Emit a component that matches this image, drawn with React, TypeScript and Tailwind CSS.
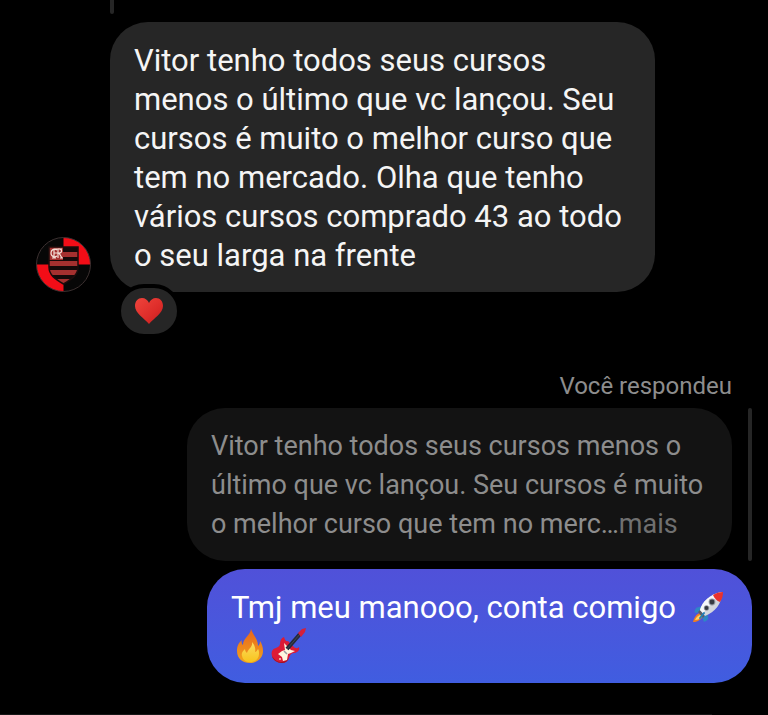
import type { ReactNode } from "react";

function Rocket() {
  return (
    <svg role="img" aria-label="foguete" viewBox="0 0 36 36" className="ml-1.5 inline-block size-9 align-[-7px]">
      <path d="M9 18C6 18 4 21 5 24l6-1 3-6zM18 27c1 3-1 5-4 6l-2-5 5-5z" fill="#2f86c5" />
      <path d="M10 24c-4 1-6 5-7 9 4 0 8-2 10-6z" fill="#ef7d22" />
      <path d="M10 26c-3 1-4 3-5 5 3 0 5-1 7-4z" fill="#ffd363" />
      <path d="M8 23l3-3 5 5-3 4z" fill="#5c5d68" />
      <path d="M10 21C12 13 20 5 32 3c0 12-7 20-17 24z" fill="#d3d6dd" />
      <path d="M10 21C12 13 20 5 32 3L13 24z" fill="#f6f7f9" />
      <path d="M23 6c3-2 6-3 10-3 0 4-1 7-3 10-3-1-6-4-7-7z" fill="#e9322d" />
      <circle cx="22" cy="13" r="3.4" fill="#9296a0" />
      <circle cx="22" cy="13" r="2.4" fill="#353942" />
      <circle cx="16.5" cy="19" r="2.7" fill="#9296a0" />
      <circle cx="16.5" cy="19" r="1.9" fill="#353942" />
      <path d="M14 24l-4 5" stroke="#2381b8" strokeWidth="2" strokeLinecap="round" />
    </svg>
  );
}

function Fire() {
  return (
    <svg role="img" aria-label="fogo" viewBox="0 0 36 36" className="mx-px inline-block size-9 align-[-7px]">
      <defs>
        <linearGradient id="flame" x1="0" y1="0" x2="0" y2="1">
          <stop offset="0" stopColor="#e8641c" />
          <stop offset="0.6" stopColor="#ee8a1c" />
          <stop offset="1" stopColor="#f0a51f" />
        </linearGradient>
        <linearGradient id="flame-core" x1="0" y1="0" x2="0" y2="1">
          <stop offset="0" stopColor="#fbdc62" />
          <stop offset="1" stopColor="#f8c41d" />
        </linearGradient>
      </defs>
      <path
        d="M19 1c-1 7-8 9-8 16-1-1-2-3-1-5-4 3-5 7-5 11 0 8 6 12 13 12s13-5 13-12c0-4-1-7-3-10 0 3-1 4-2 5 0-7-5-11-7-17z"
        fill="url(#flame)"
      />
      <path
        d="M20 14c1 5-4 7-5 11-1-1-2-2-2-4-2 2-4 4-3 7 1 4 4 6 8 6 5 0 9-3 9-8 0-2 0-4-1-5-1 2-2 3-3 3 1-4-1-8-3-10z"
        fill="url(#flame-core)"
      />
    </svg>
  );
}

function Guitar() {
  return (
    <svg role="img" aria-label="guitarra" viewBox="0 0 36 36" className="mx-px inline-block size-9 align-[-7px]">
      <path
        d="M14 9c-3 1-4 4-4 7 0 2-2 3-4 4-4 1-5 4-4 8 1 4 5 7 10 7 3 0 6-2 7-5 1-4 3-5 6-5 3-1 5-3 4-6-2 2-4 1-5 0l-6-6c-2 1-3-1-4-4z"
        fill="#dc1b36"
      />
      <path d="M2 28c1 4 5 7 10 7 3 0 6-2 7-5-3 3-5 4-8 4-4 0-7-3-9-6z" fill="#9f1024" />
      <path d="M14 15l7 7 4 1-4 2-3 1-1 6-4 1-1-4-4-3 4-3 3-1z" fill="#fff5df" />
      <path d="M17 21L30 6" stroke="#25293a" strokeWidth="4" />
      <path d="M17 21L30 6" stroke="#424854" strokeWidth="1" />
      <path d="M28 5l4-4 4-1-1 4-4 5z" fill="#d4203a" />
      <path d="M14 23l3 3" stroke="#9a9aa0" strokeWidth="1.5" />
      <circle cx="10" cy="31" r="1" fill="#f5d6b8" />
    </svg>
  );
}

function Heart() {
  return (
    <svg role="img" aria-label="coração" viewBox="0 0 28 26" className="h-[26px] w-7">
      <defs>
        <linearGradient id="heart" x1="0" y1="0" x2="1" y2="1">
          <stop offset="0" stopColor="#ef443c" />
          <stop offset="0.6" stopColor="#dd2c29" />
          <stop offset="1" stopColor="#c01d20" />
        </linearGradient>
      </defs>
      <path d="M14 26C9 20 0 15 0 8c0-5 3-8 7-8 3 0 6 2 7 5 1-3 4-5 7-5 4 0 7 3 7 8 0 7-9 12-14 18z" fill="url(#heart)" />
    </svg>
  );
}

function Avatar() {
  return (
    <svg role="img" aria-label="Foto de perfil" viewBox="0 0 56 56" className="size-14 shrink-0">
      <circle cx="27.5" cy="28.5" r="27" fill="#070707" />
      <path d="M27.5 1.5a27 27 0 0 1 27 27h-27zM27.5 55.5a27 27 0 0 1-27-27h27z" fill="#f30d17" />
      <circle cx="27.5" cy="28.5" r="27" fill="none" stroke="#3b3030" strokeWidth="1" />
      <clipPath id="crest">
        <path d="M13 11h29v20c0 8-6 12-14.5 17C19 43 13 39 13 31z" />
      </clipPath>
      <g clipPath="url(#crest)">
        <path d="M12 10h31v40H12z" fill="#150909" />
        <path d="M27 16h16v5H27zM12 25h31v5H12zM12 34h31v5H12zM12 43h31v5H12z" fill="#a5302f" />
        <path d="M13 11h14v13H13z" fill="#a5302f" />
      </g>
      <path d="M13 11h29v20c0 8-6 12-14.5 17C19 43 13 39 13 31z" fill="none" stroke="#1c0c0c" strokeWidth="1.5" />
      <path
        d="M21 14c-3-2-6 0-6 3s3 5 6 3M18 22v-9h4M18 17h4M22 22v-9c4-1 5 4 1 4l3 5M23 13h3M16 22h4M24 22h3"
        fill="none"
        stroke="#f4dfd8"
        strokeWidth="1.2"
      />
    </svg>
  );
}

function Bubble({ tone, children }: { tone: string; children: ReactNode }) {
  return (
    <div className={`w-full max-w-[545px] rounded-[38px] px-6 pt-[19px] pb-[17px] leading-[39px] ${tone}`}>
      {children}
    </div>
  );
}

export default function App() {
  return (
    <main className="flex min-h-screen flex-col bg-black font-['Roboto','Liberation_Sans',sans-serif]">
      <div className="ml-[110px] h-3.5 w-1 rounded-b-sm bg-[#262626]" />

      <section className="mt-2 flex items-end gap-[18px] pl-9">
        <Avatar />
        <Bubble tone="bg-[#262626] text-[31px] text-[#f5f5f5]">
          Vitor tenho todos seus cursos menos o último que vc lançou. Seu cursos é muito o melhor curso que tem no
          mercado. Olha que tenho vários cursos comprado 43 ao todo o seu larga na frente
        </Bubble>
      </section>
      <button
        type="button"
        aria-label="Reação: coração"
        className="relative -mt-2 ml-[117px] flex h-[54px] w-16 items-center justify-center rounded-full border-4 border-black bg-[#262626]"
      >
        <Heart />
      </button>

      <section className="mt-8 flex flex-col items-end pr-4">
        <p className="mr-5 text-2xl leading-8 text-[#8d8d8d]">Você respondeu</p>
        <div className="mt-1.5 flex w-full justify-end gap-4">
          <Bubble tone="bg-[#131313] text-[27px] text-[#8d8d8d]">
            Vitor tenho todos seus cursos menos o último que vc lançou. Seu cursos é muito o melhor curso que tem no
            merc…
            <button type="button" className="text-[#707070]">
              mais
            </button>
          </Bubble>
          <div className="w-1 rounded-full bg-[#262626]" />
        </div>
        <div className="mt-2 flex w-full justify-end">
          <Bubble tone="bg-linear-to-b from-[#5051d9] to-[#405de0] text-[31px] text-white">
            Tmj meu manooo, conta comigo <Rocket />
            <Fire />
            <Guitar />
          </Bubble>
        </div>
      </section>

      <div className="mt-auto mr-14 h-px bg-[#161616]" />
    </main>
  );
}
